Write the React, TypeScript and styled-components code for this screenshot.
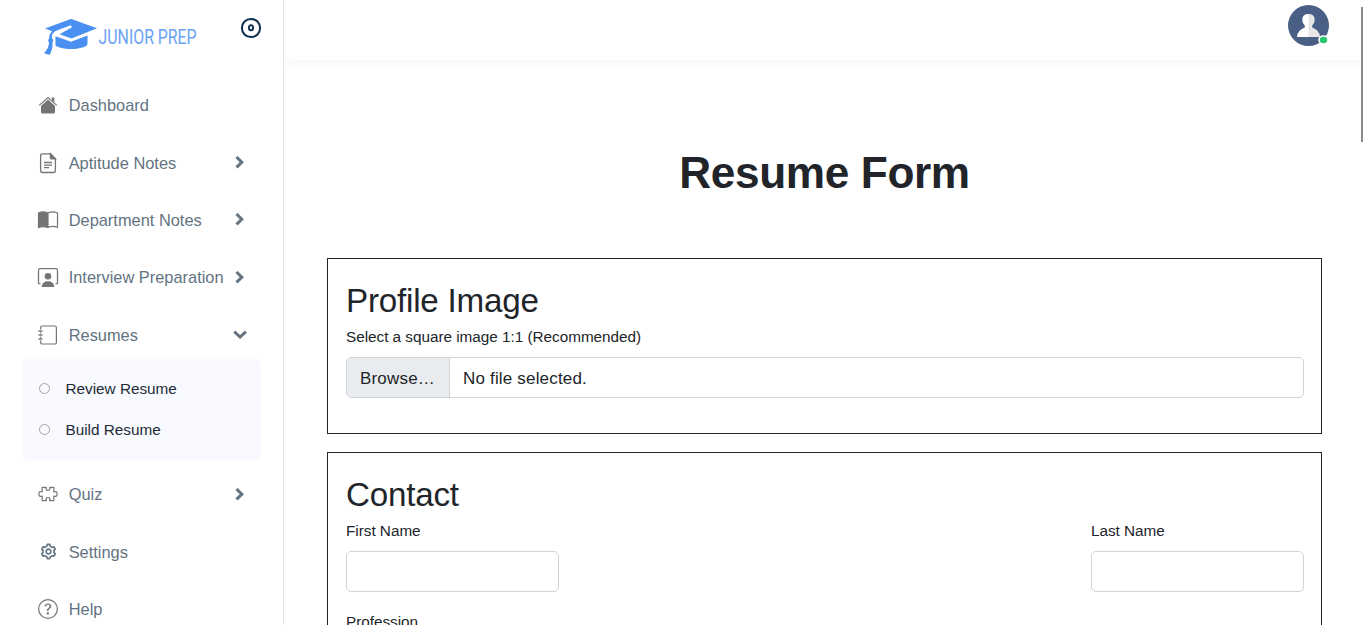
import React from "react";
import styled, { createGlobalStyle } from "styled-components";
import { BiCog } from "react-icons/bi";
import { BsQuestionCircle } from "react-icons/bs";

const GlobalStyle = createGlobalStyle`
  * { box-sizing: border-box; }
  body {
    margin: 0;
    background: #fff;
    color: #212529;
    font-family: "Liberation Sans", Arial, sans-serif;
    font-size: 15px;
    overflow: hidden;
  }
`;

const Page = styled.div`
  display: grid;
  grid-template-columns: 284px 1fr;
  height: 625px;
  overflow: hidden;
  position: relative;
`;

const Sidebar = styled.aside`
  border-right: 1px solid #e4e4e4;
  height: 625px;
  overflow: hidden;
`;

const Brand = styled.div`
  display: flex;
  justify-content: space-between;
  align-items: flex-start;
  height: 82px;
  padding: 17px 21px 0 43px;
`;

const Nav = styled.ul`
  list-style: none;
  margin: 0;
  padding: 0 22px;
  display: flex;
  flex-direction: column;
  gap: 10px;
`;

const NavLink = styled.a`
  display: flex;
  align-items: center;
  height: 47.4px;
  padding: 0 14px 0 15px;
  color: #637381;
  font-size: 16.4px;
`;

const NavIcon = styled.span`
  display: flex;
  justify-content: center;
  align-items: center;
  width: 22px;
  height: 22px;
  margin: 0 9.7px 1px 0;
  color: #757575;
`;

const NavText = styled.span`
  flex: 1;
  white-space: nowrap;
`;

const SubMenu = styled.div`
  display: flex;
  flex-direction: column;
  height: 101.2px;
  margin: -0.4px 0 1.4px;
  padding: 10.4px 16px;
  border-radius: 5px;
  background: #f9faff;
`;

const SubLink = styled.a`
  display: flex;
  align-items: center;
  flex: none;
  height: 40.8px;
  color: #212b36;
  font-size: 15.3px;
`;

const Bullet = styled.span`
  width: 11px;
  height: 11px;
  margin: 0 15.5px 2px 1px;
  border: 1px solid #a3a3a3;
  border-radius: 50%;
`;

const Main = styled.main`
  height: 625px;
  overflow: hidden;
`;

const TopBar = styled.header`
  display: flex;
  justify-content: flex-end;
  height: 60px;
  padding: 5px 36px 0 0;
  box-shadow: 0 3px 12px rgba(0, 0, 0, 0.035);
`;

const Content = styled.div`
  display: flex;
  flex-direction: column;
  padding: 87px 44px 0 43px;
`;

const Title = styled.h1`
  margin: 0 0 60px;
  font-size: 44.2px;
  line-height: 51px;
  letter-spacing: -0.38px;
  text-align: center;
`;

const Section = styled.section<{ $height: number }>`
  height: ${(p) => p.$height}px;
  margin-bottom: 18px;
  padding: 22px 17px 0 18px;
  border: 1px solid #212529;
`;

const SectionTitle = styled.h2`
  margin: 0 0 5px;
  font-size: 33.2px;
  font-weight: 400;
  line-height: 40px;
  letter-spacing: -0.22px;
`;

const Label = styled.label`
  display: block;
  margin-bottom: 10px;
  font-size: 15.3px;
  line-height: 21px;
  letter-spacing: -0.02px;
`;

const FilePicker = styled.div`
  display: flex;
  height: 41px;
  border: 1px solid #ced4da;
  border-radius: 5px;
  overflow: hidden;
  font-size: 17px;
  line-height: 41px;
  letter-spacing: 0.18px;
`;

const BrowseButton = styled.span`
  width: 103px;
  padding-left: 13px;
  background: #e9ecef;
  border-right: 1px solid #ced4da;
`;

const FileName = styled.span`
  padding-left: 13px;
`;

const FieldRow = styled.div`
  display: flex;
  justify-content: space-between;
  margin-bottom: 19px;
`;

const Field = styled.div`
  width: 213px;
`;

const Input = styled.input`
  display: block;
  width: 100%;
  height: 41px;
  border: 1px solid #ced4da;
  border-radius: 5px;
  background: #fff;
`;

const ScrollThumb = styled.div`
  position: absolute;
  top: 7px;
  right: 3px;
  width: 2px;
  height: 135px;
  background: #8a8a8a;
`;

const Logo = () => (
  <svg width="165" height="40" viewBox="43 17 165 40">
    <g fill="#4a90f0">
      <path d="M45 28.5 70 19.2Q71 18.9 72 19.2L97 28.3 71.5 38.6 59.5 34.2 72 27.2 70.8 25.2 55.5 31Q53 32.5 52 35V38.5Q54 40 52.5 42.5 53 49 49.5 55L44 53.2Q48.5 49 49 42.5 47.2 40 49.2 38.2 49 34.5 52 31.3Z" />
      <path d="M55.5 36.2 71 41.7 87.5 35.5V44.5C84 50.2 61 50.3 55.5 45.5Z" />
    </g>
    <text x="98.6" y="44" fill="#6aa3f5" fontFamily="Roboto, sans-serif" fontWeight="400" fontSize="19.8" textLength="98" lengthAdjust="spacingAndGlyphs">JUNIOR PREP</text>
  </svg>
);

const ToggleIcon = () => (
  <svg width="22" height="22" viewBox="0 0 22 22" fill="none" stroke="#0c2f4f">
    <circle cx="11" cy="11" r="9.1" strokeWidth="2" />
    <ellipse cx="11" cy="10.7" rx="2.1" ry="2.6" strokeWidth="1.9" />
  </svg>
);

const HomeIcon = () => (
  <svg width="20" height="20" viewBox="0 0 20 20">
    <path d="M1.2 10.4 10 2.6l8.8 7.8" fill="none" stroke="#757575" strokeWidth="1.2" />
    <path d="M13.8 2.5h2.5v5l-2.5-2.2Z" fill="#757575" />
    <path d="M3 10.9 10 4.6l7 6.3v6q0 1.6-1.6 1.6H4.6Q3 18.5 3 16.9Z" fill="#757575" />
  </svg>
);

const DocumentIcon = () => (
  <svg width="20" height="22" viewBox="0 0 20 22" fill="none" stroke="#757575" strokeWidth="1.3">
    <path d="M12.4 1.8H4.5Q2.6 1.8 2.6 3.7V18.6Q2.6 20.5 4.5 20.5H15.5Q17.4 20.5 17.4 18.6V6.8Z" />
    <path d="M12.4 1.8V5.3q0 1.5 1.5 1.5h3.5Z" fill="#757575" />
    <path d="M6 10.5h8M6 13.1h8M6 15.7h5" />
  </svg>
);

const BookIcon = () => (
  <svg width="22" height="20" viewBox="0 0 22 20" fill="none" stroke="#757575" strokeWidth="1.2">
    <path d="M1.5 3Q6 .9 11 3V17.5Q6 15.6 1.5 17.5Z" fill="#757575" />
    <path d="M11 3Q16 .9 20.5 3V17.3Q16 15.6 11 17.3" />
  </svg>
);

const InterviewIcon = () => (
  <svg width="22" height="22" viewBox="0 0 22 22">
    <path d="M3.5 17.9H2.7Q1.5 17.9 1.5 16.7V3.9Q1.5 2.7 2.7 2.7H19.3Q20.5 2.7 20.5 3.9V16.7Q20.5 17.9 19.3 17.9H18.5" fill="none" stroke="#757575" strokeWidth="1.3" />
    <circle cx="11" cy="10.3" r="3.3" fill="#757575" />
    <path d="M4.6 20.9Q5.3 15.2 11 15.2T17.4 20.9Z" fill="#757575" />
  </svg>
);

const NotebookIcon = () => (
  <svg width="22" height="22" viewBox="0 0 22 22" fill="none" stroke="#757575" strokeWidth="1.2">
    <path d="M3.6 5.5V3.6Q3.6 2 5.2 2H17.8Q19.4 2 19.4 3.6V18.4Q19.4 20 17.8 20H5.2Q3.6 20 3.6 18.4V16.5M3.6 8.3V9.5M3.6 12.5V13.7" />
    <path d="M1.5 7h4M1.5 11h4M1.5 15h4" strokeWidth="1.5" />
  </svg>
);

const PuzzleIcon = () => (
  <svg width="22" height="22" viewBox="0 0 22 22" fill="none" stroke="#757575" strokeWidth="1.2" strokeLinejoin="round">
    <path d="M5.7 4.3h3.2q.7 0 .5 1l-.5.8q0 1.2 2.1 1.2t2.1-1.2l-.5-.8q-.2-1 .5-1h3.2q.7 0 .7.7l-.3 3.4q.2.9 1.1.4 2.300-.8 2.300 2.200t-2.300 2.200q-.9-.5-1.100.4l.3 3.400q0 .7-.7.7h-3.200q-.7 0-.5-1l.5-.8q0-1.200-2.100-1.200t-2.100 1.200l.5.8q.2 1-.5 1H5.700q-.7 0-.7-.7l.3-3.400q-.2-.9-1.100-.4Q1.900 14 1.900 11t2.300-2.200q.9.500 1.100-.4L5 5q0-.7.7-.7Z" />
  </svg>
);

const Chevron = ({ open = false }: { open?: boolean }) => (
  <svg width="14" height="14" viewBox="0 0.5 14 14" fill="none" stroke="#637381" strokeWidth="3">
    {open ? <path d="M1.3 4.2 7.1 9.5 12.9 4.2" /> : <path d="M3.5 1.5 8.8 6.7 3.5 11.9" />}
  </svg>
);

const Avatar = () => (
  <svg width="42" height="42" viewBox="0 0 42 42">
    <circle cx="20.5" cy="20.5" r="20.5" fill="#4a5f85" />
    <path d="M9 32Q9 25.5 16.8 22.5V20.5Q14.3 18.5 14.3 14.8 14.3 9 20.5 9H21V32Z" fill="#fff" />
    <path d="M32 32Q32 25.5 24.2 22.5V20.5Q26.7 18.5 26.7 14.8 26.7 9 20.5 9V32Z" fill="#e6e6e6" />
    <ellipse cx="35.5" cy="35" rx="5.3" ry="4.8" fill="#fff" />
    <ellipse cx="35.5" cy="35" rx="3.7" ry="3.2" fill="#28c76f" />
  </svg>
);

type Item = {
  label: string;
  icon: React.ReactNode;
  expandable?: boolean;
  children?: string[];
};

const items: Item[] = [
  { label: "Dashboard", icon: <HomeIcon /> },
  { label: "Aptitude Notes", icon: <DocumentIcon />, expandable: true },
  { label: "Department Notes", icon: <BookIcon />, expandable: true },
  { label: "Interview Preparation", icon: <InterviewIcon />, expandable: true },
  { label: "Resumes", icon: <NotebookIcon />, expandable: true, children: ["Review Resume", "Build Resume"] },
  { label: "Quiz", icon: <PuzzleIcon />, expandable: true },
  { label: "Settings", icon: <BiCog size={19} color="#637381" /> },
  { label: "Help", icon: <BsQuestionCircle size={20} /> },
];

export default function App() {
  return (
    <Page>
      <GlobalStyle />
      <Sidebar>
        <Brand>
          <Logo />
          <ToggleIcon />
        </Brand>
        <Nav>
          {items.map((item) => (
            <li key={item.label}>
              <NavLink>
                <NavIcon>{item.icon}</NavIcon>
                <NavText>{item.label}</NavText>
                {item.expandable && <Chevron open={!!item.children} />}
              </NavLink>
              {item.children && (
                <SubMenu>
                  {item.children.map((child) => (
                    <SubLink key={child}>
                      <Bullet />
                      {child}
                    </SubLink>
                  ))}
                </SubMenu>
              )}
            </li>
          ))}
        </Nav>
      </Sidebar>
      <Main>
        <TopBar>
          <Avatar />
        </TopBar>
        <Content>
          <Title>Resume Form</Title>
          <Section $height={176}>
            <SectionTitle>Profile Image</SectionTitle>
            <Label>Select a square image 1:1 (Recommended)</Label>
            <FilePicker>
              <BrowseButton>Browse…</BrowseButton>
              <FileName>No file selected.</FileName>
            </FilePicker>
          </Section>
          <Section $height={500}>
            <SectionTitle>Contact</SectionTitle>
            <FieldRow>
              <Field>
                <Label>First Name</Label>
                <Input />
              </Field>
              <Field>
                <Label>Last Name</Label>
                <Input />
              </Field>
            </FieldRow>
            <Field>
              <Label>Profession</Label>
              <Input />
            </Field>
          </Section>
        </Content>
      </Main>
      <ScrollThumb />
    </Page>
  );
}
